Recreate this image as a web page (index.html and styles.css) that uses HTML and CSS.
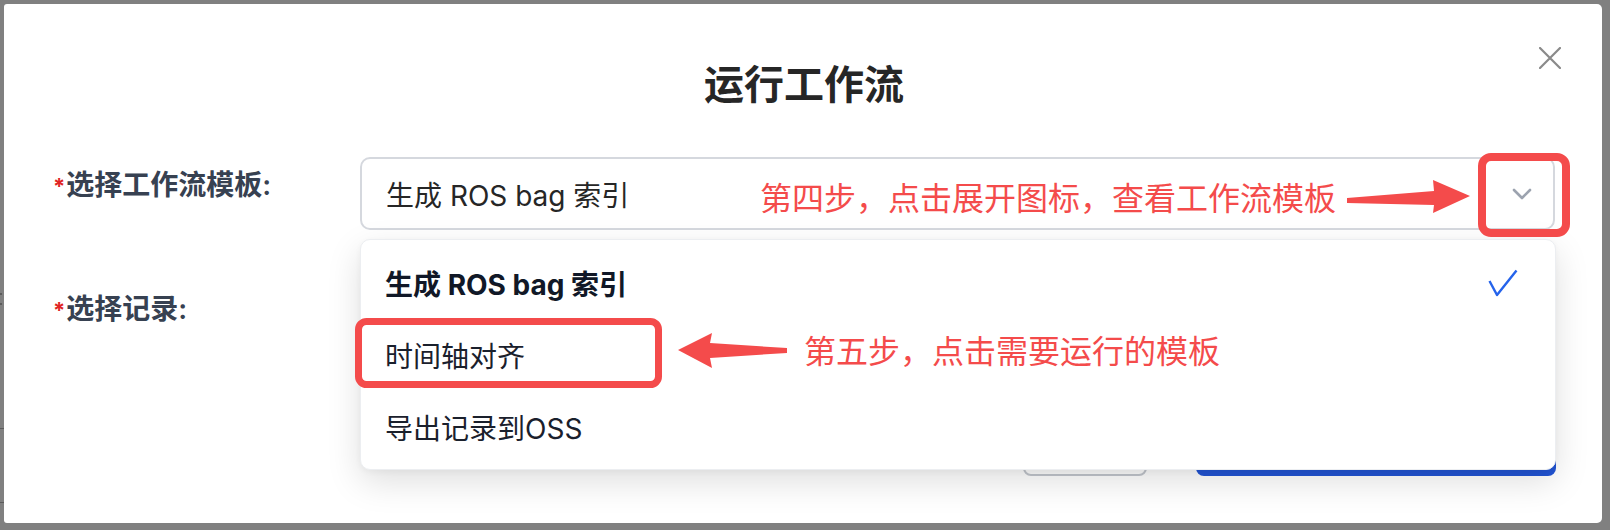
FILE: index.html
```html
<!DOCTYPE html>
<html lang="zh-CN">
<head>
<meta charset="utf-8">
<title>运行工作流</title>
<link rel="stylesheet" href="styles.css">
</head>
<body>
<div class="page-marks">
  <span class="mark mark-dot1"></span>
  <span class="mark mark-dot2"></span>
  <span class="mark mark-line1"></span>
  <span class="mark mark-line2"></span>
</div>
<div class="modal">
  <button class="close" aria-label="关闭">
    <svg width="22" height="22" viewBox="0 0 22 22"><path d="M1 1 L21 21 M21 1 L1 21" stroke="#8a8a8a" stroke-width="2.2" fill="none" stroke-linecap="round"/></svg>
  </button>
  <h2 class="title">运行工作流</h2>
  <div class="form">
    <div class="row">
      <label class="label"><span class="req">*</span>选择工作流模板:</label>
      <div class="select">
        <span class="value">生成 ROS bag 索引</span>
        <svg class="chev" width="20" height="12" viewBox="0 0 20 12"><path d="M2 2 L10 10 L18 2" stroke="#9ca3af" stroke-width="2.6" fill="none" stroke-linecap="round" stroke-linejoin="round"/></svg>
        <div class="dropdown">
          <div class="item item-active">
            <span>生成 ROS bag 索引</span>
            <svg class="check" width="30" height="28" viewBox="0 0 30 28"><path d="M1.5 12 L9 26 L28.5 1.5" stroke="#2563eb" stroke-width="2.4" fill="none" stroke-linejoin="round"/></svg>
          </div>
          <div class="item"><span>时间轴对齐</span></div>
          <div class="item"><span>导出记录到OSS</span></div>
        </div>
      </div>
    </div>
    <div class="row">
      <label class="label"><span class="req">*</span>选择记录:</label>
      <div class="select select-empty"></div>
    </div>
  </div>
  <div class="footer">
    <button class="btn btn-cancel">取消</button>
    <button class="btn btn-primary">确定</button>
  </div>

  <svg class="annot" width="1610" height="530" viewBox="0 0 1610 530">
    <rect x="1482" y="157" width="84" height="76" rx="9" fill="none" stroke="#f44b4b" stroke-width="8"/>
    <polygon points="1347,198 1434,191 1433,180 1470,196 1433,213 1434,205 1347,203" fill="#f44b4b"/>
    <rect x="358.5" y="321.5" width="300" height="63" rx="8" fill="none" stroke="#f44b4b" stroke-width="7"/>
    <polygon points="678,350 712,333 710,343 787,348 787,353 710,358 712,368" fill="#f44b4b"/>
  </svg>
  <div class="note note-1">第四步，点击展开图标，查看工作流模板</div>
  <div class="note note-2">第五步，点击需要运行的模板</div>
</div>
</body>
</html>
```

FILE: styles.css
```css
html, body {
  margin: 0;
  padding: 0;
}

body {
  width: 1610px;
  height: 530px;
  overflow: hidden;
  background: #808080;
  position: relative;
  font-family: "Inter", "Noto Sans CJK SC", sans-serif;
}

.page-marks .mark {
  position: absolute;
  left: 0;
  background: #5c5c5c;
}
.mark-dot1 { top: 293px; left: 2px; width: 2px; height: 2px; }
.mark-dot2 { top: 303px; left: 2px; width: 2px; height: 2px; }
.mark-line1 { top: 428px; width: 4px; height: 1px; }
.mark-line2 { top: 502px; width: 4px; height: 1px; }

.modal {
  position: relative;
  box-sizing: border-box;
  width: 1598px;
  height: 519px;
  margin: 4px 0 0 4px;
  padding: 0 47px 0 49px;
  background: #ffffff;
  border-radius: 3px 5px 5px 3px;
}

.close {
  position: absolute;
  top: 43px;
  right: 41px;
  width: 22px;
  height: 22px;
  padding: 0;
  border: 0;
  background: transparent;
  display: block;
}
.close svg { display: block; }

.title {
  margin: 0 0 51px 0;
  padding-top: 54px;
  height: 48px;
  line-height: 48px;
  text-align: center;
  font-size: 40px;
  font-weight: 700;
  color: #262626;
  font-family: "Noto Sans CJK SC", sans-serif;
}

.row {
  display: flex;
  height: 73px;
}
.row + .row {
  margin-top: 51px;
}

.label {
  flex: none;
  width: 307px;
  font-size: 28px;
  font-weight: 600;
  line-height: 56px;
  color: #374151;
  white-space: nowrap;
}

.req {
  color: #e02424;
  font-size: 22px;
  font-weight: 700;
  margin-right: 1px;
  vertical-align: 1px;
}

.select {
  flex: 1;
  position: relative;
  box-sizing: border-box;
  height: 73px;
  border: 2px solid #d5d8de;
  border-radius: 10px;
  display: flex;
  align-items: center;
  padding: 0 21px 0 24px;
  font-size: 28px;
  color: #262626;
  background: #fff;
}

.chev {
  margin-left: auto;
  display: block;
}

.dropdown {
  position: absolute;
  top: calc(100% + 11px);
  left: -2px;
  right: -3px;
  height: 231px;
  box-sizing: border-box;
  padding: 7px 0 6px;
  background: #fff;
  border: 1px solid #eceef1;
  border-radius: 10px;
  box-shadow: 0 12px 34px rgba(0, 0, 0, 0.13), 0 2px 6px rgba(0, 0, 0, 0.04);
  z-index: 5;
}

.item {
  height: 72px;
  display: flex;
  align-items: center;
  padding: 0 37px 0 24px;
  font-size: 28px;
  color: #1a202c;
}
.item-active {
  font-weight: 700;
  color: #111827;
}
.check {
  margin-left: auto;
  display: block;
}

.footer {
  display: flex;
  justify-content: flex-end;
  gap: 49px;
  margin-top: 58px;
  margin-right: -1px;
}

.btn {
  height: 64px;
  box-sizing: border-box;
  border-radius: 8px;
  font-size: 26px;
  font-family: "Noto Sans CJK SC", sans-serif;
}
.btn-cancel {
  width: 124px;
  background: #fff;
  border: 2px solid #c3c7ce;
  color: #374151;
}
.btn-primary {
  width: 360px;
  background: #2255d6;
  border: 0;
  color: #fff;
}

.annot {
  position: absolute;
  left: -4px;
  top: -4px;
  z-index: 10;
  pointer-events: none;
}

.note {
  position: absolute;
  z-index: 11;
  font-family: "Noto Sans CJK SC", sans-serif;
  font-size: 32px;
  line-height: 40px;
  color: #f44b4b;
  white-space: nowrap;
}
.note-1 {
  left: 756px;
  top: 172px;
}
.note-2 {
  left: 800px;
  top: 325px;
}
```
